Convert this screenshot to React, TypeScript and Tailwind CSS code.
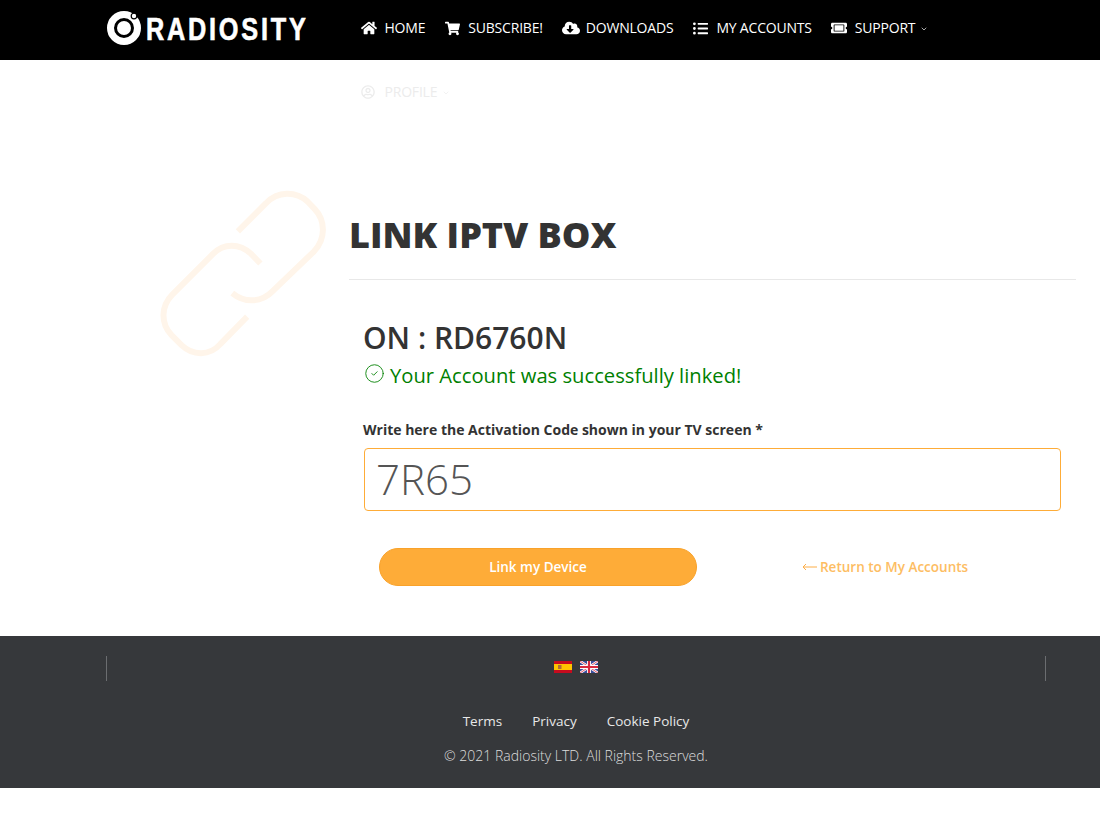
import { FaHome, FaShoppingCart, FaCloudDownloadAlt, FaListUl, FaTicketAlt, FaRegUserCircle } from 'react-icons/fa'
import { ChevronDown, CircleCheck } from 'lucide-react'

const navItems = [
    { label: 'HOME', icon: FaHome, size: 16, className: 'text-white' },
    { label: 'SUBSCRIBE!', icon: FaShoppingCart, size: 15, className: 'text-white' },
    { label: 'DOWNLOADS', icon: FaCloudDownloadAlt, size: 18, className: 'text-white' },
    { label: 'MY ACCOUNTS', icon: FaListUl, size: 15, className: 'text-white' },
    { label: 'SUPPORT', icon: FaTicketAlt, size: 16, caret: true, className: 'text-white' },
    { label: 'PROFILE', icon: FaRegUserCircle, size: 14, caret: true, className: 'text-[#ececec]' },
]

function Logo() {
    return (
        <div className="flex items-center w-[254px] shrink-0">
            <svg width="36" height="36" viewBox="0 0 36 36" className="shrink-0 -ml-px mb-[4px]">
                <circle cx="18" cy="18" r="13.5" fill="none" stroke="#fff" strokeWidth="7" />
                <circle cx="18" cy="18" r="7" fill="#fff" />
                <circle cx="28" cy="6" r="2.8" fill="#fff" stroke="#000" strokeWidth="1.2" />
            </svg>
            <span className="ml-[4px] mb-[2px] origin-left scale-x-[0.815] font-['Liberation_Sans',sans-serif] font-bold text-[31px] leading-none tracking-[3.4px] text-white [-webkit-text-stroke:0.6px_white]">
                RADIOSITY
            </span>
        </div>
    )
}

function LinkIcon() {
    return (
        <svg width="189" height="184" viewBox="0 0 570 555" fill="none" stroke="#fff5ea" strokeWidth="18">
            <path d="M265 152 L350 67 C385 30 440 30 475 62 L497 85 C530 120 530 175 495 212 L370 332 C335 368 285 368 248 338" />
            <path d="M333 249 L305 220 C270 187 222 187 190 220 L68 342 C32 378 32 430 65 465 L95 495 C130 528 180 528 212 492 L293 409" />
        </svg>
    )
}

function FlagES() {
    return (
        <svg width="18" height="12" viewBox="0 0 18 12">
            <rect width="18" height="12" fill="#c60b1e" />
            <rect y="3" width="18" height="6" fill="#ffc400" />
            <rect x="4" y="4" width="3.5" height="4" fill="#ad6b3a" />
        </svg>
    )
}

function FlagUK() {
    return (
        <svg width="18" height="12" viewBox="0 0 18 12">
            <rect width="18" height="12" fill="#3a4d9c" />
            <path d="M0 0 L18 12 M18 0 L0 12" stroke="#fff" strokeWidth="2.4" />
            <path d="M0 0 L18 12 M18 0 L0 12" stroke="#d8293f" strokeWidth="0.8" />
            <path d="M9 0 V12 M0 6 H18" stroke="#fff" strokeWidth="4" />
            <path d="M9 0 V12 M0 6 H18" stroke="#d8293f" strokeWidth="2.2" />
        </svg>
    )
}

export default function App() {
    return (
        <div className="min-h-[814px] bg-white font-['Open_Sans',sans-serif]">
            {/* Header */}
            <header className="h-[60px] bg-black pl-[107px] flex items-start">
                <div className="h-[60px] flex items-center">
                    <Logo />
                </div>
                <nav className="w-[640px] flex flex-wrap pt-[17px]">
                    {navItems.map((item) => (
                        <div key={item.label} className={`h-[64px] flex items-start mr-[19.5px] text-[14px] leading-[22px] tracking-[-0.2px] ${item.className}`}>
                            <span className="w-[23.5px] h-[22px] flex items-center">
                                <item.icon size={item.size} />
                            </span>
                            {item.label}
                            {item.caret && <ChevronDown size={8} strokeWidth={2} className="ml-[5px] mt-[8px]" />}
                        </div>
                    ))}
                </nav>
            </header>

            {/* Main */}
            <main className="h-[576px] flex">
                <div className="w-[349px] shrink-0 pl-[150px] pt-[121px]">
                    <LinkIcon />
                </div>
                <div className="w-[727px]">
                    <h1 className="pt-[150px] pb-[20px] text-[36px] leading-[49px] font-extrabold text-[#333333] border-b border-[#e8e8e8]">LINK IPTV BOX</h1>
                    <div className="pl-[15px] pr-[15px]">
                        <h2 className="-ml-px mt-[38px] text-[30px] leading-[40px] font-semibold text-[#333333]">ON : RD6760N</h2>
                        <p className="mt-[2px] flex items-center text-[20.2px] leading-[30px] text-[#008000]">
                            <CircleCheck size={21} strokeWidth={1} className="mr-[5px] mb-[3px]" />
                            Your Account was successfully linked!
                        </p>
                        <label className="block -ml-px mt-[30px] text-[14px] leading-[20px] font-bold text-[#333333]">Write here the Activation Code shown in your TV screen *</label>
                        <div className="mt-[8px] h-[63px] border border-[#feac38] rounded-[4px] pl-[11px] pb-[2px] flex items-center text-[42px] font-light text-[#555555]">7R65</div>
                        <div className="mt-[37px] pl-[15px] flex items-center">
                            <button className="w-[318px] h-[38px] rounded-full bg-[#feac38] border border-[#f9a22a] text-white text-[13.5px] font-semibold">Link my Device</button>
                            <a className="ml-[105px] flex items-center gap-[3px] text-[13.5px] font-semibold text-[#fdbd63]">
                                <svg width="15" height="8" viewBox="0 0 15 8" fill="none" stroke="#fdae48" strokeWidth="1">
                                    <path d="M15 4 H1 M4 1 L1 4 L4 7" />
                                </svg>
                                Return to My Accounts
                            </a>
                        </div>
                    </div>
                </div>
            </main>

            {/* Footer */}
            <footer className="h-[152px] bg-[#36383b] pt-[20px] pl-[106px] pr-[54px]">
                <div className="h-[25px] flex justify-between">
                    <div className="w-px h-[25px] bg-[#6b6d70]" />
                    <div className="flex gap-2 pt-[5px] h-[17px]">
                        <FlagES />
                        <FlagUK />
                    </div>
                    <div className="w-px h-[25px] bg-[#6b6d70]" />
                </div>
                <div className="mt-[30px] flex justify-center gap-[30px] text-[13.5px] leading-[20px] text-[#e8e8e8]">
                    <span>Terms</span>
                    <span>Privacy</span>
                    <span>Cookie Policy</span>
                </div>
                <p className="mt-[15px] text-center text-[14px] leading-[20px] font-light text-[#dddddd]">© 2021 Radiosity LTD. All Rights Reserved.</p>
            </footer>
        </div>
    )
}
